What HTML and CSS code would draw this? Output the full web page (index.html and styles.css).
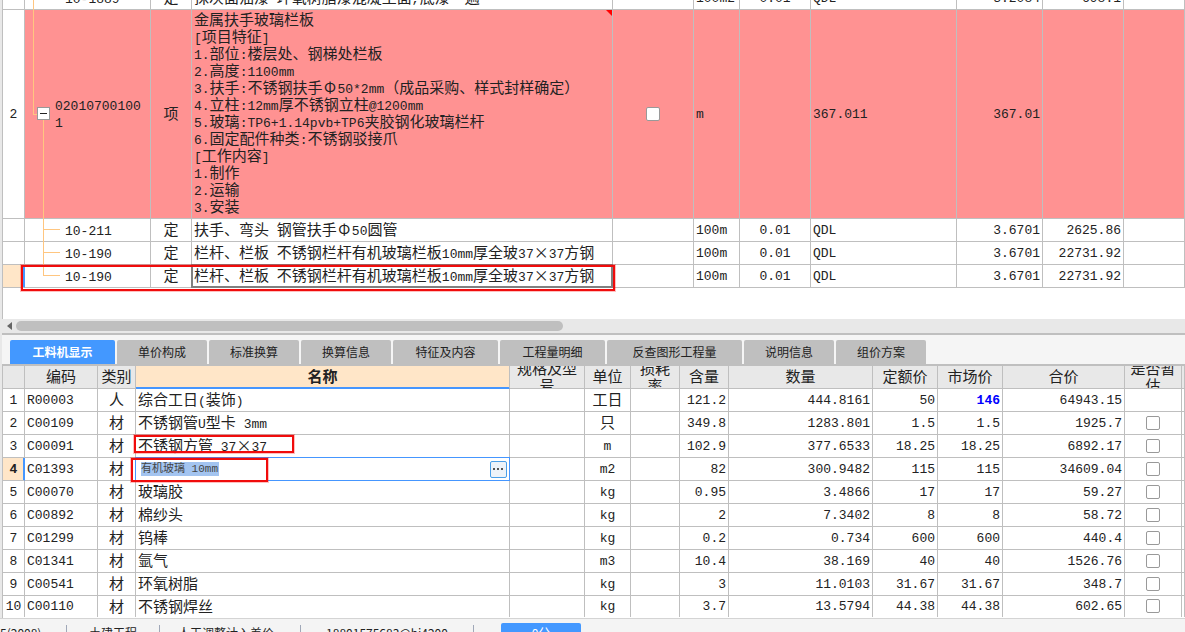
FILE: index.html
```html
<!DOCTYPE html>
<html lang="zh-CN">
<head>
<meta charset="utf-8">
<title>工料机显示</title>
<link rel="stylesheet" href="styles.css">
</head>
<body>
<main class="app">
  <section class="items">
    <table class="grid items-grid">
      <colgroup><col class="w22"><col class="w126"><col class="w41"><col class="w421"><col class="w81"><col class="w46"><col class="w71"><col class="w146"><col class="w86"><col class="w81"><col></colgroup>
      <tbody>
        <tr><td></td><td class="code tree-outer"><span class="n">10-1889</span></td><td class="c">定</td><td>抹灰面油漆<span class="n"> </span>环氧树脂漆混凝土面<span class="n">,</span>底漆一遍</td><td></td><td class="n">100m2</td><td class="n c">0.01</td><td class="n">QDL</td><td class="n r">3.2084</td><td class="n r">698.1</td><td></td></tr>
        <tr class="alert">
          <td class="n c rownum">2</td>
          <td class="code parent"><button class="fold" type="button" aria-label="折叠"></button><span class="n">020107001001</span></td>
          <td class="c">项</td>
          <td class="feature">金属扶手玻璃栏板<br><span class="n">[</span>项目特征<span class="n">]</span><br><span class="n">1.</span>部位<span class="n">:</span>楼层处、钢梯处栏板<br><span class="n">2.</span>高度<span class="n">:1100mm</span><br><span class="n">3.</span>扶手<span class="n">:</span>不锈钢扶手<span class="wide">Φ</span><span class="n">50*2mm</span>（成品采购、样式封样确定）<br><span class="n">4.</span>立柱<span class="n">:12mm</span>厚不锈钢立柱<span class="n">@1200mm</span><br><span class="n">5.</span>玻璃<span class="n">:TP6+1.14pvb+TP6</span>夹胶钢化玻璃栏杆<br><span class="n">6.</span>固定配件种类<span class="n">:</span>不锈钢驳接爪<br><span class="n">[</span>工作内容<span class="n">]</span><br><span class="n">1.</span>制作<br><span class="n">2.</span>运输<br><span class="n">3.</span>安装</td>
          <td class="c"><input class="check" type="checkbox" aria-label="锁定"></td>
          <td class="n">m</td><td></td><td class="n">367.011</td><td class="n r">367.01</td><td></td><td></td>
        </tr>
        <tr><td></td><td class="code child"><span class="n">10-211</span></td><td class="c">定</td><td>扶手、弯头<span class="n"> </span>钢管扶手<span class="wide">Φ</span><span class="n">50</span>圆管</td><td></td><td class="n">100m</td><td class="n c">0.01</td><td class="n">QDL</td><td class="n r">3.6701</td><td class="n r">2625.86</td><td></td></tr>
        <tr><td></td><td class="code child"><span class="n">10-190</span></td><td class="c">定</td><td>栏杆、栏板<span class="n"> </span>不锈钢栏杆有机玻璃栏板<span class="n">10mm</span>厚全玻<span class="n">37</span><span class="wide">×</span><span class="n">37</span>方钢</td><td></td><td class="n">100m</td><td class="n c">0.01</td><td class="n">QDL</td><td class="n r">3.6701</td><td class="n r">22731.92</td><td></td></tr>
        <tr><td class="current"><span class="mark mark-row"></span></td><td class="code child last"><span class="n">10-190</span></td><td class="c">定</td><td class="selected">栏杆、栏板<span class="n"> </span>不锈钢栏杆有机玻璃栏板<span class="n">10mm</span>厚全玻<span class="n">37</span><span class="wide">×</span><span class="n">37</span>方钢</td><td></td><td class="n">100m</td><td class="n c">0.01</td><td class="n">QDL</td><td class="n r">3.6701</td><td class="n r">22731.92</td><td></td></tr>
      </tbody>
    </table>
  </section>

  <div class="scrollbar">
    <svg class="arrow" viewBox="0 0 5 8" aria-hidden="true"><path d="M5 0v8L0 4z"/></svg>
    <div class="track"><div class="thumb"></div></div>
  </div>

  <nav class="tabs">
    <button type="button" class="tab active">工料机显示</button>
    <button type="button" class="tab">单价构成</button>
    <button type="button" class="tab">标准换算</button>
    <button type="button" class="tab">换算信息</button>
    <button type="button" class="tab">特征及内容</button>
    <button type="button" class="tab">工程量明细</button>
    <button type="button" class="tab">反查图形工程量</button>
    <button type="button" class="tab">说明信息</button>
    <button type="button" class="tab">组价方案</button>
  </nav>

  <section class="materials">
    <table class="grid">
      <colgroup><col class="w22"><col class="w73"><col class="w38"><col class="w374"><col class="w75"><col class="w46"><col class="w49"><col class="w49"><col class="w144"><col class="w65"><col class="w65"><col class="w122"><col class="w57"><col></colgroup>
      <thead>
        <tr><th></th><th><div>编码</div></th><th><div>类别</div></th><th class="sorted"><div>名称</div></th><th><div>规格及型号</div></th><th><div>单位</div></th><th><div>损耗率</div></th><th><div>含量</div></th><th><div>数量</div></th><th><div>定额价</div></th><th><div>市场价</div></th><th><div>合价</div></th><th><div>是否暂估</div></th><th></th></tr>
      </thead>
      <tbody>
        <tr><td class="n c">1</td><td class="n">R00003</td><td class="c">人</td><td>综合工日<span class="n">(</span>装饰<span class="n">)</span></td><td></td><td class="c">工日</td><td></td><td class="n r">121.2</td><td class="n r">444.8161</td><td class="n r">50</td><td class="n r changed">146</td><td class="n r">64943.15</td><td></td><td></td></tr>
        <tr><td class="n c">2</td><td class="n">C00109</td><td class="c">材</td><td>不锈钢管<span class="n">U</span>型卡<span class="n"> 3mm</span></td><td></td><td class="c">只</td><td></td><td class="n r">349.8</td><td class="n r">1283.801</td><td class="n r">1.5</td><td class="n r">1.5</td><td class="n r">1925.7</td><td class="c"><input class="check" type="checkbox" aria-label="是否暂估"></td><td></td></tr>
        <tr><td class="n c">3</td><td class="n">C00091</td><td class="c">材</td><td class="marked">不锈钢方管<span class="n"> 37</span><span class="wide">×</span><span class="n">37</span><span class="mark mark-tube"></span></td><td></td><td class="n c">m</td><td></td><td class="n r">102.9</td><td class="n r">377.6533</td><td class="n r">18.25</td><td class="n r">18.25</td><td class="n r">6892.17</td><td class="c"><input class="check" type="checkbox" aria-label="是否暂估"></td><td></td></tr>
        <tr><td class="n c current">4</td><td class="n">C01393</td><td class="c">材</td><td class="editing"><div class="editor"><input class="edit" type="text" aria-label="名称" value="有机玻璃 10mm"><button class="more" type="button" aria-label="更多"><svg viewBox="0 0 15 15"><path d="M2 6h2v2H2zM6 6h2v2H6zM10 6h2v2h-2z"/></svg></button></div><span class="mark mark-glass"></span></td><td></td><td class="n c">m2</td><td></td><td class="n r">82</td><td class="n r">300.9482</td><td class="n r">115</td><td class="n r">115</td><td class="n r">34609.04</td><td class="c"><input class="check" type="checkbox" aria-label="是否暂估"></td><td></td></tr>
        <tr><td class="n c">5</td><td class="n">C00070</td><td class="c">材</td><td>玻璃胶</td><td></td><td class="n c">kg</td><td></td><td class="n r">0.95</td><td class="n r">3.4866</td><td class="n r">17</td><td class="n r">17</td><td class="n r">59.27</td><td class="c"><input class="check" type="checkbox" aria-label="是否暂估"></td><td></td></tr>
        <tr><td class="n c">6</td><td class="n">C00892</td><td class="c">材</td><td>棉纱头</td><td></td><td class="n c">kg</td><td></td><td class="n r">2</td><td class="n r">7.3402</td><td class="n r">8</td><td class="n r">8</td><td class="n r">58.72</td><td class="c"><input class="check" type="checkbox" aria-label="是否暂估"></td><td></td></tr>
        <tr><td class="n c">7</td><td class="n">C01299</td><td class="c">材</td><td>钨棒</td><td></td><td class="n c">kg</td><td></td><td class="n r">0.2</td><td class="n r">0.734</td><td class="n r">600</td><td class="n r">600</td><td class="n r">440.4</td><td class="c"><input class="check" type="checkbox" aria-label="是否暂估"></td><td></td></tr>
        <tr><td class="n c">8</td><td class="n">C01341</td><td class="c">材</td><td>氩气</td><td></td><td class="n c">m3</td><td></td><td class="n r">10.4</td><td class="n r">38.169</td><td class="n r">40</td><td class="n r">40</td><td class="n r">1526.76</td><td class="c"><input class="check" type="checkbox" aria-label="是否暂估"></td><td></td></tr>
        <tr><td class="n c">9</td><td class="n">C00541</td><td class="c">材</td><td>环氧树脂</td><td></td><td class="n c">kg</td><td></td><td class="n r">3</td><td class="n r">11.0103</td><td class="n r">31.67</td><td class="n r">31.67</td><td class="n r">348.7</td><td class="c"><input class="check" type="checkbox" aria-label="是否暂估"></td><td></td></tr>
        <tr class="final"><td class="n c">10</td><td class="n">C00110</td><td class="c">材</td><td>不锈钢焊丝</td><td></td><td class="n c">kg</td><td></td><td class="n r">3.7</td><td class="n r">13.5794</td><td class="n r">44.38</td><td class="n r">44.38</td><td class="n r">602.65</td><td class="c"><input class="check" type="checkbox" aria-label="是否暂估"></td><td></td></tr>
      </tbody>
    </table>
  </section>

  <footer class="status">
    <span class="s1">5(2008)</span>
    <span class="s2">土建工程</span>
    <span class="s3">人工调整计入差价</span>
    <span class="s4">18801575683@hj4200</span>
    <button type="button" class="score">0分</button>
  </footer>
</main>
</body>
</html>
```
FILE: styles.css
```css
* { box-sizing: border-box; }

body {
  margin: 0;
  height: 100vh;
  overflow: hidden;
  background: #e8e8e8;
  color: #222;
  font: 15px/17px "Noto Sans CJK SC", sans-serif;
}

.app { padding-left: 2px; }

/* Grids */
.grid {
  width: 100%;
  table-layout: fixed;
  border-collapse: separate;
  border-spacing: 0;
}
.grid td, .grid th {
  position: relative;
  height: 23px;
  padding: 0 2px 3px;
  border: solid #bfbfbf;
  border-width: 0 1px 1px 0;
  font-weight: 400;
  line-height: 17px;
  white-space: nowrap;
}
.grid .n {
  font-family: "Liberation Mono", monospace;
  font-size: 13px;
  white-space: pre;
}
.grid span.n { line-height: 0; }
.grid .c { padding: 0 0 3px; text-align: center; }
.grid td.n { padding: 0 2px; }
.grid .r { text-align: right; }
.wide { display: inline-block; width: 15px; text-align: center; }

.w22 { width: 22px; }
.w38 { width: 38px; }
.w41 { width: 41px; }
.w46 { width: 46px; }
.w49 { width: 49px; }
.w57 { width: 57px; }
.w65 { width: 65px; }
.w71 { width: 71px; }
.w73 { width: 73px; }
.w75 { width: 75px; }
.w81 { width: 81px; }
.w86 { width: 86px; }
.w122 { width: 122px; }
.w126 { width: 126px; }
.w144 { width: 144px; }
.w146 { width: 146px; }
.w374 { width: 374px; }
.w421 { width: 421px; }

.items, .materials { border-left: 1px solid #bfbfbf; background: #fff; overflow: hidden; }
.items { padding-bottom: 31px; }

/* Scrolled so that the first row is only partly in view */
.items-grid { margin-top: -13px; }

.alert td { background: #ff9292; }
.alert td.rownum { background: #fff; }
.grid .feature { padding: 0 2px 4px; }
.feature::after {
  content: "";
  position: absolute;
  top: 0;
  right: 0;
  width: 6px;
  height: 6px;
  background: #f00;
  clip-path: polygon(0 0, 100% 0, 100% 100%);
}

/* Tree column */
.grid .code { padding-left: 40px; }
.code::before, .code::after { content: ""; position: absolute; }
.tree-outer::before { left: 8px; top: 0; bottom: -1px; border-left: 1px solid #ffc680; }
.grid .parent { padding: 0 5px 4px 30px; }
.grid .parent .n { white-space: normal; word-break: break-all; }
.parent::before { left: 8px; top: 0; height: 104px; width: 5px; border: solid #ffc680; border-width: 0 0 1px 1px; }
.parent::after { left: 18px; top: 110px; bottom: -1px; border-left: 1px solid #ffc680; }
.child::before { left: 18px; top: 0; bottom: -1px; border-left: 1px solid #ffc680; }
.child.last::before { bottom: 11px; }
.child::after { left: 18px; top: 10px; width: 17px; border-top: 1px solid #ffc680; }
.fold {
  position: absolute;
  left: 12px;
  top: 97px;
  width: 13px;
  height: 13px;
  padding: 0;
  border: 1px solid #999;
  background: linear-gradient(#222, #222) center / 7px 1px no-repeat #fff;
}

.grid .current {
  background: #ffe6c8;
  font-weight: 700;
  box-shadow: inset -1px 0 #4596ff;
  border-right-color: #4596ff;
}
.selected::after, .editing::after {
  content: "";
  position: absolute;
  inset: -1px;
  border: 2px solid #808080;
  pointer-events: none;
}
.editing::after { border: 1px solid #4596ff; }

.mark {
  position: absolute;
  z-index: 2;
  border: 2px solid #f00c0c;
  outline: 1px solid #ff000040;
  pointer-events: none;
}
.mark-row { left: 18px; top: 0; width: 594px; height: 26px; }
.mark-tube { left: -2px; top: 0; width: 160px; height: 18px; }
.mark-glass { left: -5px; top: 0; width: 137px; height: 24px; }

.check {
  appearance: none;
  display: block;
  width: 14px;
  height: 14px;
  margin: 2px auto 0;
  border: 1px solid #999;
  border-radius: 2px;
  background: #fff;
}

/* Horizontal scrollbar */
.scrollbar {
  display: flex;
  align-items: center;
  gap: 4px;
  height: 16px;
  padding: 0 5px;
  border-bottom: 2px solid #bfbfbf;
  background: #e8e8e8;
}
.arrow { width: 5px; height: 8px; fill: #666; }
.track { flex: 1; }
.thumb { width: 47%; height: 10px; border-radius: 5px; background: #bfbfbf; }

/* Tabs */
.tabs {
  display: flex;
  gap: 2px;
  padding: 5px 8px 0;
  border-bottom: 2px solid #bfbfbf;
  background: #f5f5f5;
}
.tab {
  flex: none;
  min-width: 90px;
  height: 24px;
  padding: 0;
  border: 0;
  border-radius: 2px 2px 0 0;
  background: #bfbfbf;
  color: #222;
  font: 12px/24px "Noto Sans CJK SC", sans-serif;
}
.tab:nth-child(1), .tab:nth-child(5), .tab:nth-child(6) { min-width: 105px; }
.tab:nth-child(7) { min-width: 135px; }
.tab.active { background: #4398ff; color: #fff; font-weight: 700; }

/* Materials */
.materials { padding-bottom: 1px; }
.grid th { padding: 0 3px; background: #e8e8e8; white-space: normal; }
.grid th div {
  display: flex;
  align-items: center;
  justify-content: center;
  height: 22px;
  padding-bottom: 3px;
  overflow: hidden;
  text-align: center;
}
.grid th.sorted { background: #ffe6c8; border-bottom-color: #4596ff; box-shadow: inset 0 -1px #4596ff; font-weight: 700; }
.grid .changed { color: #00f; font-weight: 700; }
.grid .final td { height: 21px; border-bottom: 0; }

.grid .editing { padding-bottom: 0; }
.editor { display: flex; align-items: center; justify-content: space-between; height: 22px; padding-left: 3px; }
.edit {
  width: 78px;
  height: 14px;
  padding: 0;
  border: 0;
  background: #a3c4f0;
  color: #444;
  font: 11px/14px "Liberation Mono", "Noto Sans CJK SC", monospace;
}
.more {
  width: 17px;
  height: 17px;
  padding: 0;
  border: 1px solid #4a9fe8;
  border-radius: 2px;
  background: #edf3f9;
}
.more svg { display: block; width: 15px; height: 15px; fill: #555; }

/* Status bar */
.status {
  display: flex;
  align-items: flex-start;
  margin-left: -2px;
  padding-top: 4px;
  border-top: 1px solid #d4d4d4;
  background: #f4f4f4;
  font-size: 12px;
  line-height: 15px;
}
.status span {
  margin-top: 2px;
  border-right: 1px solid #a0a8b8;
  text-align: center;
  white-space: nowrap;
}
.s1 { width: 67px; padding-right: 28px; }
.s2 { width: 93px; }
.s3 { width: 141px; padding-right: 8px; }
.s4 { width: 173px; }
.score {
  width: 80px;
  height: 24px;
  margin-left: 27px;
  padding: 0 0 4px;
  border: 0;
  border-radius: 2px;
  background: #4398ff;
  color: #fff;
  font: 12px/20px "Noto Sans CJK SC", sans-serif;
}
```
